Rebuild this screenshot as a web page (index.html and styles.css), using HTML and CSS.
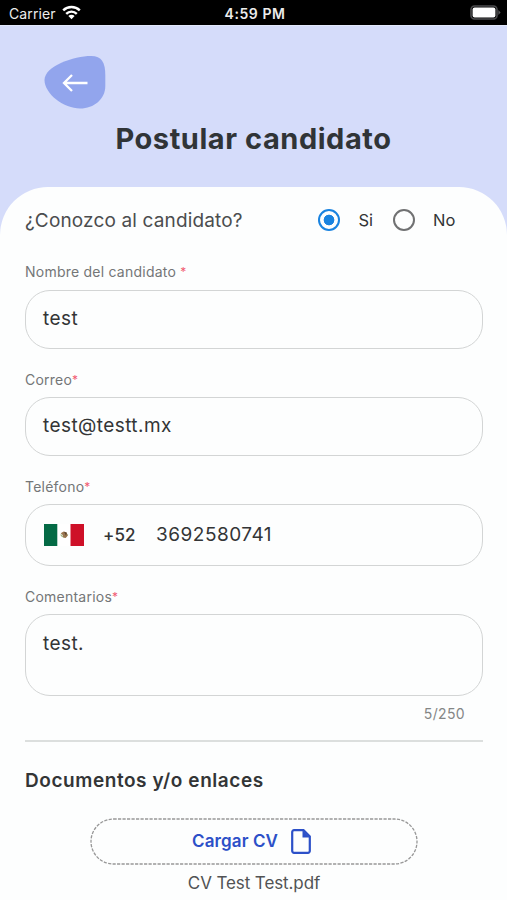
FILE: index.html
```html
<!DOCTYPE html>
<html lang="es">
<head>
<meta charset="utf-8">
<meta name="viewport" content="width=device-width, initial-scale=1">
<title>Postular candidato</title>
<link rel="stylesheet" href="styles.css">
</head>
<body>
<div class="status">
  <div class="carrier"><span>Carrier</span>
    <svg width="19" height="15" viewBox="0 0 19 15" fill="none" stroke="#fff" stroke-width="2.4"><path d="M1.2 5.4a11.8 11.8 0 0 1 16.6 0M4.2 8.8a7.5 7.5 0 0 1 10.6 0"/><path d="M9.5 14.2 6.4 11.1a4.4 4.4 0 0 1 6.2 0z" fill="#fff" stroke="none"/></svg>
  </div>
  <span class="clock">4:59 PM</span>
  <svg class="battery" width="31" height="15" viewBox="0 0 31 15"><rect x="1" y="1" width="26" height="13" rx="3.5" fill="#000" stroke="#4b4b4d" stroke-width="1.6"/><rect x="2.6" y="2.4" width="22.8" height="10.2" rx="2" fill="#fff"/><path d="M28.4 5v5l2.2-2.5z" fill="#5b5b5d"/></svg>
</div>
<header class="header">
  <svg class="back" width="62" height="54" viewBox="0 0 62 54"><path d="M.5 25C.5 11 30 1 47 1C58 1 61.300 8 61.300 20V31C61.300 44 50 53.500 36 53.500C20 53.500 .5 39 .5 25Z" fill="#92a5ed"/><path d="M43.500 28H20M28 20l-8 8 8 8" fill="none" stroke="#fff" stroke-width="2.300"/></svg>
  <h1>Postular candidato</h1>
</header>
<main class="sheet">
  <div class="question">
    <span class="ask">¿Conozco al candidato?</span>
    <span class="radio on"></span><span class="choice">Si</span>
    <span class="radio"></span><span class="choice">No</span>
  </div>
  <div class="label first">Nombre del candidato <b>*</b></div>
  <div class="field">test</div>
  <div class="label">Correo<b>*</b></div>
  <div class="field">test@testt.mx</div>
  <div class="label">Teléfono<b>*</b></div>
  <div class="field phone">
    <svg width="40" height="22" viewBox="0 0 40 22"><path fill="#fff" d="M0 0h40v22H0z"/><path fill="#046a45" d="M0 0h13.300v22H0z"/><path fill="#ce1028" d="M26.500 0H40v22H26.500z"/><path d="M16.700 10.500a3.800 3.800 0 0 0 7 0" fill="none" stroke="#a4b886" stroke-width="1.300"/><path d="M16.700 9.200l3-1.800 3 1.100 1 3-2 2.500-2.500-.5-.5-2.400z" fill="#9a7550"/><path d="M20 7.800l2.700 1-.7 3z" fill="#59442e"/></svg>
    <span class="code">+52</span><span class="number">3692580741</span>
  </div>
  <div class="label">Comentarios<b>*</b></div>
  <div class="field area">test.</div>
  <div class="counter">5/250</div>
  <h2>Documentos y/o enlaces</h2>
  <div class="upload">
    <svg class="outline" width="328" height="47" viewBox="0 0 328 47"><rect x="1" y="1" width="326" height="45" rx="22.500" fill="none" stroke="#989898" stroke-width="1.300" stroke-dasharray="3.200 1.300"/></svg>
    <span class="action">Cargar CV</span>
    <svg width="20" height="25" viewBox="0 0 20 25"><path d="M3 1.200H12.500L18.800 7.500V22a1.800 1.800 0 0 1-1.800 1.800H3A1.800 1.800 0 0 1 1.200 22V3A1.800 1.800 0 0 1 3 1.200Z" fill="none" stroke="#2c50c8" stroke-width="2.200"/><path d="M11.500 1v7.500H19z" fill="#2c50c8"/></svg>
  </div>
  <div class="file">CV Test Test.pdf</div>
</main>
</body>
</html>
```
FILE: styles.css
```css
* { box-sizing: border-box; }
body {
  margin: 0;
  height: 900px;
  overflow: hidden;
  background: #d5dcfa;
  color: #333536;
  font-family: Inter, "Liberation Sans", sans-serif;
}
svg { display: block; flex: none; }
.status {
  height: 25px;
  padding: 2px 6px 0 9px;
  display: grid;
  grid-template-columns: 1fr auto 1fr;
  align-items: center;
  background: #000;
  color: #ececec;
  font-size: 14px;
}
.carrier { display: flex; align-items: center; gap: 6px; letter-spacing: .1px; }
.carrier svg, .battery { margin-top: -2px; }
.clock { font-weight: 600; font-size: 14px; letter-spacing: .55px; }
.battery { justify-self: end; }
.header {
  height: 162px;
  padding-top: 29px;
  border-top: 1px solid #e2e8fb;
}
.back { margin-left: 44px; }
h1 {
  margin: 12px 0 0;
  text-align: center;
  font-size: 29px;
  line-height: 36px;
  font-weight: 700;
  letter-spacing: .55px;
  color: #303437;
}
.sheet {
  height: 713px;
  padding: 0 24px 0 25px;
  background: #fdfefe;
  border-radius: 48px 48px 0 0;
}
.question { height: 66px; display: flex; align-items: center; font-size: 18px; }
.ask { width: 293px; font-size: 19px; letter-spacing: .15px; color: #4b4d4e; white-space: nowrap; }
.radio {
  width: 22px;
  height: 22px;
  border: 2.3px solid #707172;
  border-radius: 50%;
}
.radio.on {
  border-color: #1983e0;
  background: radial-gradient(circle, #1983e0 5px, transparent 5.7px);
}
.choice { width: 34px; margin-left: 18.5px; font-size: 16.5px; }
.label {
  height: 48px;
  padding-top: 12px;
  display: flex;
  align-items: center;
  color: #747677;
  font-size: 14px;
  letter-spacing: .23px;
  white-space: pre;
}
.label.first { height: 37px; padding-top: 0; }
.label b { color: #f15b72; font-size: 12px; font-weight: 400; }
.field {
  height: 59px;
  padding: 0 17px 2px;
  display: flex;
  align-items: center;
  border: 1.5px solid #d3d5d5;
  border-radius: 25px;
  font-size: 19px;
  letter-spacing: .42px;
}
.phone { height: 62px; padding: 0 18px; }
.code { width: 53px; margin-left: 19px; font-size: 17px; font-weight: 500; letter-spacing: 0.1px; }
.number { margin-top: -2px; letter-spacing: .5px; }
.area { height: 82px; padding-top: 17px; align-items: flex-start; }
.counter {
  height: 46px;
  padding: 9px 18px 0 0;
  border-bottom: 2px solid #dcdfde;
  text-align: right;
  color: #848686;
  font-size: 14px;
  letter-spacing: .35px;
  line-height: 18px;
}
h2 {
  margin: 0;
  height: 76px;
  font-size: 19px;
  line-height: 77px;
  font-weight: 600;
  letter-spacing: .56px;
}
.upload {
  position: relative;
  width: 328px;
  height: 47px;
  margin-left: 65px;
  padding-left: 102px;
  display: flex;
  align-items: center;
  gap: 13px;
  color: #2c50c8;
}
.outline { position: absolute; inset: 0; }
.action { margin-top: -1px; font-size: 17px; font-weight: 600; letter-spacing: .12px; white-space: nowrap; }
.file { text-align: center; font-size: 17px; line-height: 36px; letter-spacing: -.1px; color: #515354; }
```
